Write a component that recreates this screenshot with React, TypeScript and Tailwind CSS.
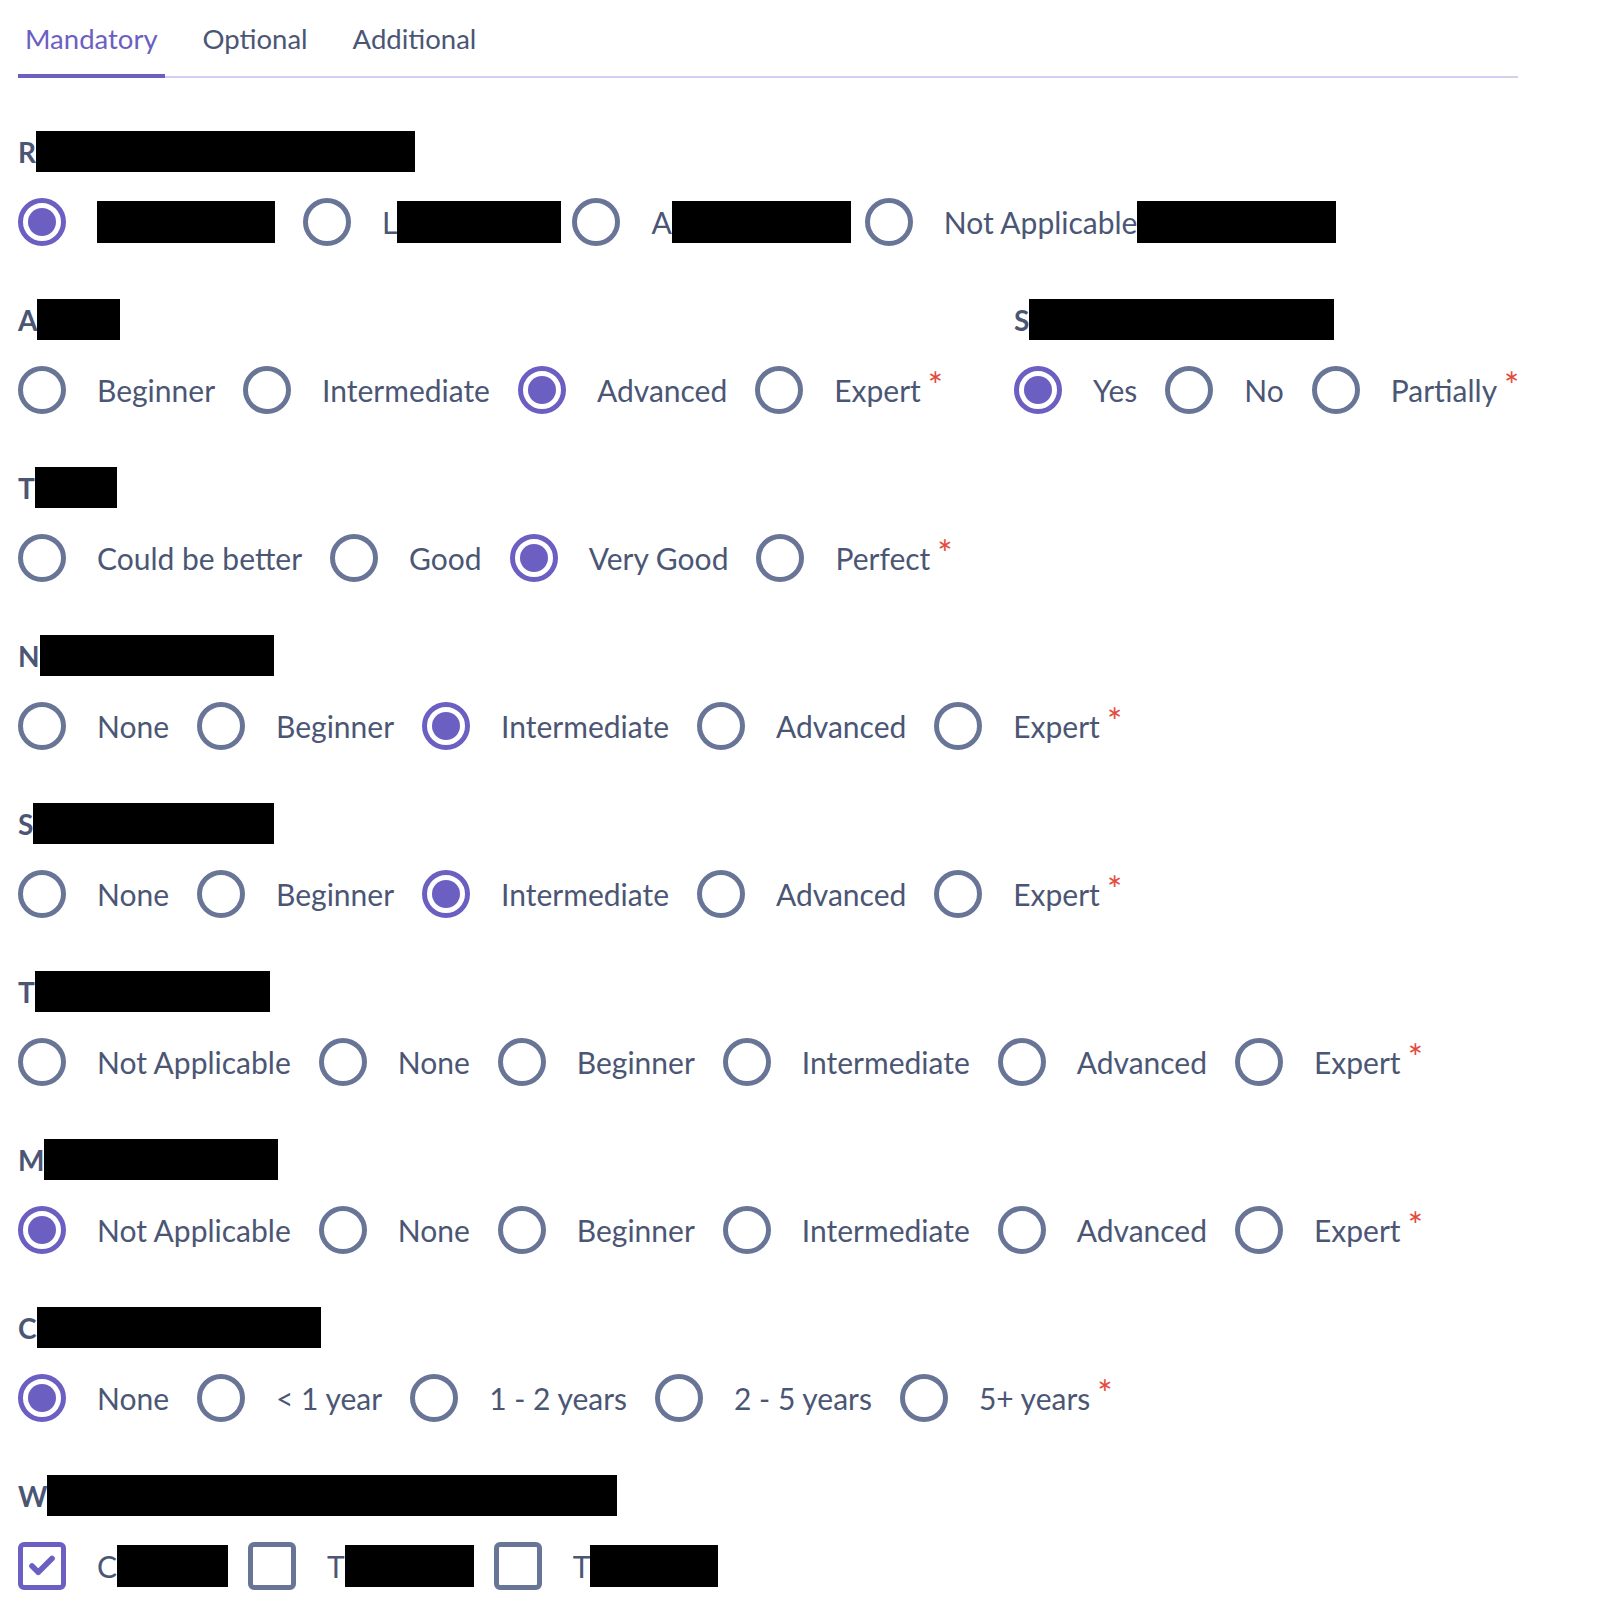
import { Check } from 'lucide-react';

type Opt = { text?: string; box?: string; checked?: boolean };

const Radio = ({ checked }: { checked?: boolean }) => (
  <span
    className={`flex h-[48px] w-[48px] shrink-0 items-center justify-center rounded-full border-[5px] ${
      checked ? 'border-[#6c5fc2]' : 'border-[#687597]'
    }`}
  >
    {checked && <span className="h-[28px] w-[28px] rounded-full bg-[#6c5fc2]" />}
  </span>
);

const CheckBox = ({ checked }: { checked?: boolean }) => (
  <span
    className={`flex h-[48px] w-[48px] shrink-0 items-center justify-center rounded-[6px] border-[5px] ${
      checked ? 'border-[#6c5fc2]' : 'border-[#687597]'
    }`}
  >
    {checked && <Check className="h-[30px] w-[30px] text-[#6c5fc2]" strokeWidth={4.5} />}
  </span>
);

const Star = () => (
  <span className="ml-[7px] -translate-y-[5px] text-[36px] leading-none text-[#e4493b]">*</span>
);

const OptLabel = ({ opt, required }: { opt: Opt; required?: boolean }) => (
  <span className="ml-[31px] flex items-center whitespace-nowrap text-[30px]">
    {opt.text}
    {opt.box && <span className={`h-[42px] bg-black ${opt.box}`} />}
    {required && <Star />}
  </span>
);

const RadioGroup = ({ options, required = true }: { options: Opt[]; required?: boolean }) => (
  <div className="mt-[26px] flex h-[48px] items-center">
    {options.map((opt, i) => (
      <label key={i} className="mr-[28px] flex items-center">
        <Radio checked={opt.checked} />
        <OptLabel opt={opt} required={required && i === options.length - 1} />
      </label>
    ))}
  </div>
);

const CheckGroup = ({ options }: { options: Opt[] }) => (
  <div className="mt-[26px] flex h-[48px] items-center">
    {options.map((opt, i) => (
      <label key={i} className="mr-[20px] flex items-center">
        <CheckBox checked={opt.checked} />
        <OptLabel opt={opt} />
      </label>
    ))}
  </div>
);

const FieldLabel = ({ letter, box }: { letter: string; box: string }) => (
  <div className="flex h-[41px] items-center font-bold">
    {letter}
    <span className={`h-[41px] bg-black ${box}`} />
  </div>
);

const levels = (checked: number, withNa = false): Opt[] => {
  const names = withNa
    ? ['Not Applicable', 'None', 'Beginner', 'Intermediate', 'Advanced', 'Expert']
    : ['None', 'Beginner', 'Intermediate', 'Advanced', 'Expert'];
  return names.map((text, i) => ({ text, checked: i === checked }));
};

const App = () => {
  const tabs = ['Mandatory', 'Optional', 'Additional'];

  return (
    <div className="min-h-screen bg-white pl-[18px] pt-[20px] text-[28px] text-[#4b5675] font-['Lato','Noto_Sans',sans-serif]">
      <div className="w-[1500px]">
        {/* Tabs */}
        <div className="flex gap-[31px] border-b-2 border-[#d3cfee]">
          {tabs.map((tab, i) => (
            <button
              key={tab}
              className={`-mb-[2px] border-b-4 px-[7px] pb-[16px] text-[27.5px] leading-[38px] ${
                i === 0 ? 'border-[#6c5fc2] text-[#6c5fc2]' : 'border-transparent'
              }`}
            >
              {tab}
            </button>
          ))}
        </div>

        <div className="mt-[53px] flex flex-col gap-[53px]">
          <section>
            <FieldLabel letter="R" box="w-[379px]" />
            <RadioGroup
              required={false}
              options={[
                { box: 'w-[178px]', checked: true },
                { text: 'L', box: 'w-[164px] -mr-[17px]' },
                { text: 'A', box: 'w-[179px] -mr-[14px]' },
                { text: 'Not Applicable', box: 'w-[199px]' },
              ]}
            />
          </section>

          <section className="grid grid-cols-[996px_1fr]">
            <div>
              <FieldLabel letter="A" box="w-[83px]" />
              <RadioGroup
                options={[
                  { text: 'Beginner' },
                  { text: 'Intermediate' },
                  { text: 'Advanced', checked: true },
                  { text: 'Expert' },
                ]}
              />
            </div>
            <div>
              <FieldLabel letter="S" box="w-[305px]" />
              <RadioGroup
                options={[{ text: 'Yes', checked: true }, { text: 'No' }, { text: 'Partially' }]}
              />
            </div>
          </section>

          <section>
            <FieldLabel letter="T" box="w-[82px]" />
            <RadioGroup
              options={[
                { text: 'Could be better' },
                { text: 'Good' },
                { text: 'Very Good', checked: true },
                { text: 'Perfect' },
              ]}
            />
          </section>

          <section>
            <FieldLabel letter="N" box="w-[234px]" />
            <RadioGroup options={levels(2)} />
          </section>

          <section>
            <FieldLabel letter="S" box="w-[241px]" />
            <RadioGroup options={levels(2)} />
          </section>

          <section>
            <FieldLabel letter="T" box="w-[235px]" />
            <RadioGroup options={levels(-1, true)} />
          </section>

          <section>
            <FieldLabel letter="M" box="w-[234px]" />
            <RadioGroup options={levels(0, true)} />
          </section>

          <section>
            <FieldLabel letter="C" box="w-[284px]" />
            <RadioGroup
              options={[
                { text: 'None', checked: true },
                { text: '< 1 year' },
                { text: '1 - 2 years' },
                { text: '2 - 5 years' },
                { text: '5+ years' },
              ]}
            />
          </section>

          <section>
            <FieldLabel letter="W" box="w-[570px]" />
            <CheckGroup
              options={[
                { text: 'C', box: 'w-[111px]', checked: true },
                { text: 'T', box: 'w-[129px]' },
                { text: 'T', box: 'w-[128px]' },
              ]}
            />
          </section>
        </div>
      </div>
    </div>
  );
};

export default App;
